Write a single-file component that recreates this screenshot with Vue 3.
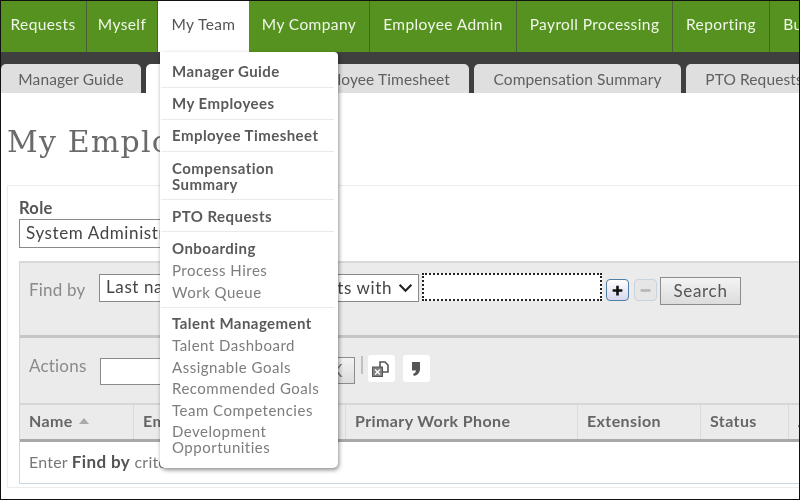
<script setup>
const navItems = [
  { label: 'Requests', width: 87 },
  { label: 'Myself', width: 71 },
  { label: 'My Team', width: 91, active: true },
  { label: 'My Company', width: 121 },
  { label: 'Employee Admin', width: 147 },
  { label: 'Payroll Processing', width: 156 },
  { label: 'Reporting', width: 97 },
  { label: 'Business', width: 90 }
]
const tabs = [
  { label: 'Manager Guide', width: 140 },
  { label: 'My Employees', width: 137, active: true },
  { label: 'Employee Timesheet', width: 181 },
  { label: 'Compensation Summary', width: 207 },
  { label: 'PTO Requests', width: 136 }
]
const columns = [
  { label: 'Name', width: 114, sort: true },
  { label: 'Employee ID', width: 212 },
  { label: 'Primary Work Phone', width: 232 },
  { label: 'Extension', width: 123 },
  { label: 'Status', width: 88 },
  { label: 'Actions', width: 80 }
]
const menu = [
  { title: 'Manager Guide', cls: 'first' },
  { title: 'My Employees' },
  { title: 'Employee Timesheet' },
  { title: 'Compensation Summary' },
  { title: 'PTO Requests' },
  { title: 'Onboarding', links: ['Process Hires', 'Work Queue'] },
  {
    title: 'Talent Management',
    links: ['Talent Dashboard', 'Assignable Goals', 'Recommended Goals', 'Team Competencies', 'Development Opportunities']
  }
]
</script>

<template>
  <div class="screen">
    <nav class="nav">
      <a
        v-for="item in navItems"
        :key="item.label"
        class="nav-item"
        :class="{ active: item.active }"
        :style="{ width: item.width + 'px' }"
      >{{ item.label }}</a>
    </nav>

    <div class="tabs">
      <a
        v-for="tab in tabs"
        :key="tab.label"
        class="tab"
        :class="{ active: tab.active }"
        :style="{ width: tab.width + 'px' }"
      >{{ tab.label }}</a>
    </div>

    <main class="main">
      <h1 class="title">My Employees</h1>

      <section class="panel">
        <label class="role-label">Role</label>
        <div class="role-select">System Administrator</div>

        <div class="box">
          <div class="find">
            <span class="find-label">Find by</span>
            <div class="fake-select sel-a">Last name</div>
            <div class="fake-select sel-b">
              <span>Starts with</span>
              <svg class="chev" viewBox="0 0 14 9"><path d="M1.500 1.500 7 7l5.500-5.500" /></svg>
            </div>
            <div class="find-input"></div>
            <button class="mini plus">
              <svg viewBox="0 0 12 12"><path d="M6 1.500v9M1.500 6h9" /></svg>
            </button>
            <button class="mini minus">
              <svg viewBox="0 0 12 12"><path d="M1.500 6h9" /></svg>
            </button>
            <button class="search">Search</button>
          </div>

          <div class="actions">
            <span class="actions-label">Actions</span>
            <div class="actions-input"></div>
            <button class="ok">OK</button>
            <span class="sep"></span>
            <span class="icon-btn">
              <svg viewBox="0 0 20 20" width="20" height="20">
                <path d="M9 3h5l3 3v7h-6V9H9z" fill="#fff" stroke="#555" stroke-width="1.600" />
                <rect x="1.500" y="8" width="10" height="9.500" fill="#808080" stroke="#555" />
                <path d="M4 10.500l5 5M9 10.500l-5 5" stroke="#fff" stroke-width="1.300" />
              </svg>
            </span>
            <span class="icon-btn">
              <svg viewBox="0 0 20 20" width="20" height="20">
                <path d="M6 3h8v7c0 3-2 6-6 7l-1-2c2-.7 3-2 3-3.500H6z" fill="#555" />
              </svg>
            </span>
          </div>

          <div class="thead">
            <div
              v-for="col in columns"
              :key="col.label"
              class="th"
              :style="{ width: col.width + 'px' }"
            >
              {{ col.label }}
              <span v-if="col.sort" class="sort"></span>
            </div>
          </div>

          <div class="tbody">Enter <b>Find by</b> criteria and click Search.</div>
        </div>
      </section>
    </main>

    <div class="menu">
      <div v-for="group in menu" :key="group.title" class="group" :class="group.cls">
        <div class="group-title">{{ group.title }}</div>
        <a v-for="link in group.links" :key="link" class="link">{{ link }}</a>
      </div>
    </div>
  </div>
</template>

<style>
html, body { margin: 0; background: #fff; }
</style>

<style scoped>
.screen {
  position: relative;
  box-sizing: border-box;
  width: 800px;
  height: 500px;
  overflow: hidden;
  border: 1px solid #111;
  background: #fff;
  font-family: Lato, "Open Sans", sans-serif;
  color: #555;
  filter: blur(0.35px);
}
.nav {
  display: flex;
  height: 51px;
  margin-left: -1px;
  background: #55921f;
}
.nav-item {
  box-sizing: border-box;
  flex: none;
  display: flex;
  align-items: center;
  justify-content: center;
  padding-bottom: 5px;
  border-right: 1.500px solid #4a5f3a;
  color: #f1f6ea;
  font-size: 15.500px;
  letter-spacing: 0.4px;
  white-space: nowrap;
}
.nav-item.active { background: #fff; color: #555; border-right: 0; }
.tabs {
  display: flex;
  gap: 5px;
  height: 41px;
  box-sizing: border-box;
  padding-top: 12px;
  background: #3f3f3f;
}
.tab {
  box-sizing: border-box;
  flex: none;
  height: 29px;
  display: flex;
  align-items: center;
  justify-content: center;
  background: #dfdfdf;
  border-radius: 5px 5px 0 0;
  font-size: 15.500px;
  letter-spacing: 0.1px;
  color: #606060;
  white-space: nowrap;
}
.tab.active { background: #fff; }
.main {
  width: 840px;
  padding: 0 0 0 6px;
}
.title {
  margin: 30px 0 0 0;
  height: 62px;
  font-family: "DejaVu Serif", serif;
  font-weight: 400;
  font-size: 30px;
  line-height: 38px;
  letter-spacing: 1.200px;
  color: #6a6a6a;
  white-space: nowrap;
}
.panel {
  box-sizing: border-box;
  height: 303px;
  padding: 12px 0 0 11px;
  border: 1px solid #ececec;
}
.role-label {
  display: block;
  font-size: 16.500px;
  font-weight: 700;
  letter-spacing: 0.3px;
  line-height: 20px;
  color: #555;
}
.role-select {
  box-sizing: border-box;
  width: 190px;
  height: 29px;
  margin-top: 1px;
  padding-left: 6px;
  border: 1.500px solid #8a8a8a;
  font-size: 17px;
  letter-spacing: 0.600px;
  line-height: 26px;
  color: #444;
  white-space: nowrap;
}
.box {
  margin-top: 13px;
  border-left: 1.500px solid #d5d5d5;
  border-top: 2px solid #d8d8d8;
  background: #ebebeb;
}
.find {
  box-sizing: border-box;
  display: flex;
  align-items: flex-start;
  height: 72px;
  padding: 11px 0 0 9px;
}
.find-label {
  width: 70px;
  flex: none;
  margin-top: 5px;
  font-size: 17px;
  letter-spacing: 0.200px;
  color: #8a8a8a;
}
.fake-select {
  box-sizing: border-box;
  flex: none;
  height: 28px;
  background: #fff;
  border: 1.500px solid #8a8a8a;
  font-size: 17px;
  letter-spacing: 0.600px;
  line-height: 24px;
  color: #444;
  white-space: nowrap;
}
.sel-a { width: 160px; padding-left: 6px; }
.sel-b {
  display: flex;
  align-items: center;
  justify-content: flex-end;
  gap: 6px;
  width: 160px;
  padding-right: 5px;
  border-left: 0;
}
.chev {
  width: 15px;
  height: 10px;
  fill: none;
  stroke: #222;
  stroke-width: 2;
}
.find-input {
  box-sizing: border-box;
  flex: none;
  width: 180px;
  height: 28px;
  margin-top: -1px;
  margin-left: 3px;
  background: #fff;
  border: 2px dotted #222;
}
.mini {
  box-sizing: border-box;
  flex: none;
  width: 23px;
  height: 22px;
  margin-top: 5px;
  padding: 0;
  display: flex;
  align-items: center;
  justify-content: center;
  border-radius: 4px;
}
.mini svg { width: 13px; height: 13px; fill: none; stroke-width: 2.400; }
.plus {
  margin-left: 4px;
  background: linear-gradient(#fff, #d7d7ef);
  border: 1.500px solid #4f7fa6;
}
.plus svg { stroke: #111; }
.minus {
  margin-left: 5px;
  background: #e6e6e6;
  border: 1.500px solid #c8d3de;
}
.minus svg { stroke: #b5b5b5; }
.search {
  box-sizing: border-box;
  flex: none;
  width: 81px;
  height: 28px;
  margin-top: 3px;
  margin-left: 3px;
  padding: 0 0 2px;
  background: linear-gradient(#f4f4f4, #dcdcdc);
  border: 1.500px solid #8c8c8c;
  font-family: inherit;
  font-size: 17px;
  letter-spacing: 0.700px;
  color: #555;
}
.actions {
  box-sizing: border-box;
  display: flex;
  align-items: flex-start;
  height: 68px;
  padding: 18px 0 0 9px;
  border-top: 3px solid #c6c6c6;
}
.actions-label {
  flex: none;
  width: 71px;
  margin-top: -1px;
  font-size: 17px;
  letter-spacing: 0.200px;
  color: #8a8a8a;
}
.actions-input {
  box-sizing: border-box;
  flex: none;
  width: 200px;
  height: 27px;
  margin-top: 2px;
  background: #fff;
  border: 1.500px solid #8a8a8a;
}
.ok {
  box-sizing: border-box;
  flex: none;
  width: 50px;
  height: 27px;
  margin-top: 1px;
  margin-left: 5px;
  padding: 0;
  background: linear-gradient(#f2f2f2, #dcdcdc);
  border: 1.500px solid #8c8c8c;
  font-family: inherit;
  font-size: 17px;
  color: #777;
}
.sep {
  flex: none;
  width: 1.500px;
  height: 18px;
  margin: 0 5px 0 6px;
  background: #c0c0c0;
}
.icon-btn {
  box-sizing: border-box;
  flex: none;
  width: 27px;
  height: 27px;
  margin-right: 8px;
  margin-top: -1px;
  display: flex;
  align-items: center;
  justify-content: center;
  background: #fff;
  border-radius: 3px;
}
.thead {
  display: flex;
  height: 39px;
  box-sizing: border-box;
  border-top: 2px solid #d6d6d6;
  border-bottom: 3px solid #a8a8a8;
  background: #ebebeb;
}
.th {
  box-sizing: border-box;
  flex: none;
  display: flex;
  align-items: center;
  gap: 6px;
  padding-left: 9px;
  padding-bottom: 3px;
  border-right: 1.500px solid #dadada;
  font-size: 16px;
  font-weight: 700;
  letter-spacing: 0.400px;
  color: #666;
  white-space: nowrap;
}
.sort {
  width: 0;
  height: 0;
  border-left: 5px solid transparent;
  border-right: 5px solid transparent;
  border-bottom: 6px solid #aaa;
}
.tbody {
  box-sizing: border-box;
  height: 42px;
  padding-top: 9px;
  padding-left: 9px;
  background: #fff;
  border-bottom: 1px solid #c8d8e6;
  font-size: 16px;
  letter-spacing: 0.200px;
  color: #777;
  white-space: nowrap;
}
.tbody b { color: #555; font-size: 17px; letter-spacing: 0.400px; }
.menu {
  position: absolute;
  left: 159px;
  top: 51px;
  box-sizing: border-box;
  width: 178px;
  height: 416px;
  padding: 0 4px 0 1px;
  background: #fff;
  border-radius: 0 4px 5px 5px;
  box-shadow: 1px 2px 4px rgba(0, 0, 0, 0.45);
}
.group {
  padding: 7.700px 11px 7.500px 11px;
  border-bottom: 1.500px solid #eaeaea;
}
.group.first { padding-top: 11px; }
.group:last-child { border-bottom: 0; padding-top: 6.200px; }
.group-title {
  font-size: 15px;
  font-weight: 700;
  letter-spacing: 0.450px;
  line-height: 16px;
  color: #5a5a5a;
}
.link {
  display: block;
  margin-top: 5.500px;
  font-size: 15px;
  letter-spacing: 0.500px;
  line-height: 16px;
  color: #7d7d7d;
}
.group-title + .link { margin-top: 6.500px; }
</style>
